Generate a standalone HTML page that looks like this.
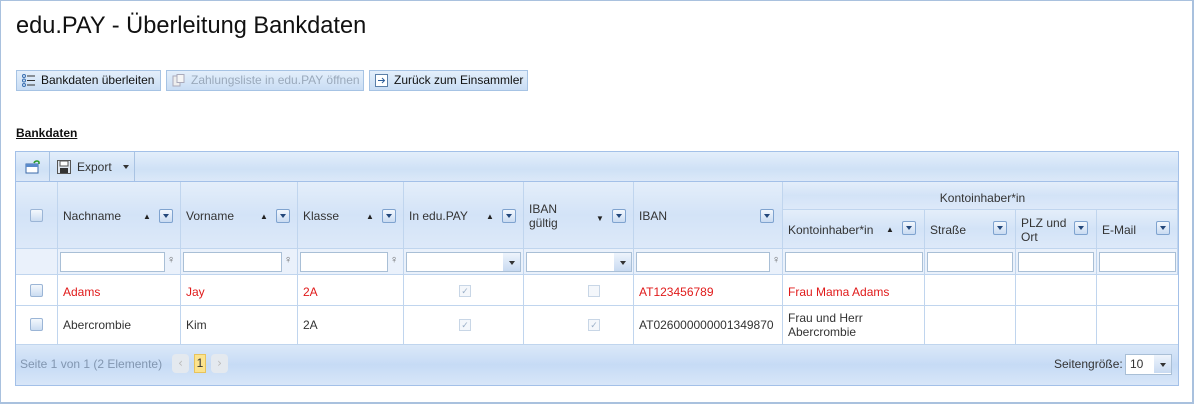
<!DOCTYPE html>
<html><head><meta charset="utf-8"><style>
*{box-sizing:border-box}
body{margin:0;width:1194px;height:405px;overflow:hidden;font-family:"DejaVu Sans","Liberation Sans",sans-serif;font-size:12px;color:#333;background:#fff}
.frame{position:absolute;left:0;top:0;width:1194px;height:404px;border:1px solid #a9c1de;border-right-width:2px;border-bottom-width:2px}
h1{position:absolute;left:16px;top:13px;margin:0;font-family:"Liberation Sans",sans-serif;font-weight:normal;font-size:23.6px;color:#111}
.btn{position:absolute;top:70px;height:21px;border:1px solid #a6c3e4;background:linear-gradient(#e4effb,#c9ddf4);font-family:"Liberation Sans",sans-serif;font-size:12px;line-height:19px;padding-left:24px;color:#111;white-space:nowrap}
.btn.dis{color:#9aa9bb}
.btn i{position:absolute;left:5px;top:3px;width:13px;height:13px}
.lbl{position:absolute;left:16px;top:126px;font-family:"Liberation Sans",sans-serif;font-weight:bold;font-size:12px;text-decoration:underline;color:#111}
.grid{position:absolute;left:15px;top:151px;width:1164px;height:235px;border:1px solid #a3c0e8;background:#fff}
.tb{position:absolute;left:0;top:0;width:1162px;height:30px;background:linear-gradient(#e3eefb,#cfe1f6 60%,#dbe8f8);border-bottom:1px solid #a3c0e8}
.c{position:absolute;border-right:1px solid #c0d5ee;border-bottom:1px solid #c0d5ee;font-size:12px;font-family:"Liberation Sans",sans-serif;padding-left:5px;white-space:nowrap}
.hd{background:linear-gradient(#e4eefa,#d3e3f7 50%,#dde9f9)}
.fr{background:#eaf1fb}
.red{color:#e01a1a}
.dd{position:absolute;width:14px;height:14px;border:1px solid #7fa3cf;background:linear-gradient(#f2f7fd,#c9dbf2);border-radius:2px}
.dd:after{content:"";position:absolute;left:3px;top:4px;border-left:3px solid transparent;border-right:3px solid transparent;border-top:4px solid #23477a}
.ar{position:absolute;font-size:8px;color:#222}
.inp{position:absolute;height:20px;border:1px solid #a9bfd6;background:#fff}
.sel:after{content:"";position:absolute;right:0;top:0;width:17px;height:18px;background:linear-gradient(#eef4fc,#c8daf1)}
.sel:before{content:"";position:absolute;right:5px;top:8px;border-left:3px solid transparent;border-right:3px solid transparent;border-top:4px solid #333;z-index:2}
.cb{position:absolute;width:13px;height:13px;border:1px solid #9bb5d6;background:linear-gradient(#f4f8fd,#cbdcf1);border-radius:2px}
.ck{position:absolute;width:12px;height:12px;border:1px solid #c8d6e6;background:#f4f7fb;font-size:9px;color:#9cb0c8;line-height:10px;text-align:center}
.pager{position:absolute;left:0;top:193px;width:1162px;height:40px;background:linear-gradient(#dbe8f8,#c6dbf5 50%,#d8e6f8)}
.fn{position:absolute;font-size:11px;color:#666}
</style></head><body>
<div class="frame"></div>
<h1>edu.PAY - Überleitung Bankdaten</h1>
<div class="btn" style="left:16px;width:145px"><i><svg width="13" height="13"><circle cx="2" cy="2" r="1.5" fill="none" stroke="#3a6fb0"/><circle cx="2" cy="6.5" r="1.5" fill="none" stroke="#3a6fb0"/><circle cx="2" cy="11" r="1.5" fill="none" stroke="#3a6fb0"/><path d="M5 2h8M5 6.5h8M5 11h8" stroke="#333"/></svg></i>Bankdaten überleiten</div>
<div class="btn dis" style="left:166px;width:198px"><i><svg width="13" height="13"><rect x="1" y="2" width="7" height="10" fill="#eee" stroke="#aab"/><rect x="5" y="0.5" width="7" height="8" fill="#f5f5f5" stroke="#aab"/></svg></i>Zahlungsliste in edu.PAY öffnen</div>
<div class="btn" style="left:369px;width:159px"><i><svg width="13" height="13"><rect x="0.5" y="0.5" width="12" height="12" fill="#fff" stroke="#5b7fa8"/><path d="M3 6.5h6M7 4l2.5 2.5L7 9" stroke="#2f5f9a" fill="none"/></svg></i>Zurück zum Einsammler</div>
<div class="lbl">Bankdaten</div>

<div class="grid">
 <div class="tb">
  <svg style="position:absolute;left:9px;top:7px" width="16" height="16"><rect x="1" y="5" width="12" height="9" fill="#fff" stroke="#3b6aa8"/><rect x="1" y="5" width="12" height="3" fill="#5a8acb"/><path d="M9 4a3 3 0 0 1 5-1l0 2" stroke="#2a9a2a" fill="none" stroke-width="1.5"/></svg>
  <div style="position:absolute;left:33px;top:0;width:1px;height:29px;background:#a9c3e3"></div>
  <svg style="position:absolute;left:41px;top:8px" width="14" height="14"><rect x="0.5" y="0.5" width="13" height="13" fill="#dfe6ef" stroke="#555"/><rect x="3" y="1" width="8" height="5" fill="#fff" stroke="#555"/><rect x="3" y="8" width="8" height="5" fill="#333"/></svg>
  <div style="position:absolute;left:61px;top:8px;font-family:'Liberation Sans',sans-serif">Export</div>
  <div style="position:absolute;left:107px;top:13px;border-left:3px solid transparent;border-right:3px solid transparent;border-top:4px solid #333"></div>
  <div style="position:absolute;left:118px;top:0;width:1px;height:29px;background:#a9c3e3"></div>
 </div>
 <div class="c hd" style="left:0;top:30px;width:42px;height:67px"><div class="cb" style="left:14px;top:27px"></div></div>
 <div class="c hd" style="left:42px;top:30px;width:123px;height:67px;padding-top:27px">Nachname<span class="ar" style="left:85px;top:30px">▲</span><div class="dd" style="left:101px;top:27px"></div></div>
 <div class="c hd" style="left:165px;top:30px;width:117px;height:67px;padding-top:27px">Vorname<span class="ar" style="left:79px;top:30px">▲</span><div class="dd" style="left:95px;top:27px"></div></div>
 <div class="c hd" style="left:282px;top:30px;width:106px;height:67px;padding-top:27px">Klasse<span class="ar" style="left:68px;top:30px">▲</span><div class="dd" style="left:84px;top:27px"></div></div>
 <div class="c hd" style="left:388px;top:30px;width:120px;height:67px;padding-top:27px">In edu.PAY<span class="ar" style="left:82px;top:30px">▲</span><div class="dd" style="left:98px;top:27px"></div></div>
 <div class="c hd" style="left:508px;top:30px;width:110px;height:67px;padding-top:20px;line-height:14px;white-space:normal">IBAN<br>gültig<span class="ar" style="left:72px;top:30px">▼</span><div class="dd" style="left:88px;top:27px"></div></div>
 <div class="c hd" style="left:618px;top:30px;width:149px;height:67px;padding-top:27px">IBAN<div class="dd" style="left:126px;top:27px"></div></div>
 <div class="c hd" style="left:767px;top:30px;width:395px;height:28px;text-align:center;padding-top:9px">Kontoinhaber*in</div>
 <div class="c hd" style="left:767px;top:58px;width:142px;height:39px;padding-top:13px">Kontoinhaber*in<span class="ar" style="left:103px;top:15px">▲</span><div class="dd" style="left:119px;top:11px"></div></div>
 <div class="c hd" style="left:909px;top:58px;width:91px;height:39px;padding-top:13px">Straße<div class="dd" style="left:68px;top:11px"></div></div>
 <div class="c hd" style="left:1000px;top:58px;width:81px;height:39px;padding-top:6px;line-height:14px;white-space:normal">PLZ und<br>Ort<div class="dd" style="left:58px;top:11px"></div></div>
 <div class="c hd" style="left:1081px;top:58px;width:81px;height:39px;padding-top:13px">E-Mail<div class="dd" style="left:59px;top:11px"></div></div>
 <div class="c fr" style="left:0;top:97px;width:42px;height:26px"></div>
 <div class="c fr" style="left:42px;top:97px;width:123px;height:26px"><div class="inp" style="left:2px;top:3px;width:105px"></div><span class="fn" style="left:109px;top:5px">♀</span></div>
 <div class="c fr" style="left:165px;top:97px;width:117px;height:26px"><div class="inp" style="left:2px;top:3px;width:99px"></div><span class="fn" style="left:103px;top:5px">♀</span></div>
 <div class="c fr" style="left:282px;top:97px;width:106px;height:26px"><div class="inp" style="left:2px;top:3px;width:88px"></div><span class="fn" style="left:92px;top:5px">♀</span></div>
 <div class="c fr" style="left:388px;top:97px;width:120px;height:26px"><div class="inp sel" style="left:2px;top:3px;width:115px"></div></div>
 <div class="c fr" style="left:508px;top:97px;width:110px;height:26px"><div class="inp sel" style="left:2px;top:3px;width:106px"></div></div>
 <div class="c fr" style="left:618px;top:97px;width:149px;height:26px"><div class="inp" style="left:2px;top:3px;width:134px"></div><span class="fn" style="left:138px;top:5px">♀</span></div>
 <div class="c fr" style="left:767px;top:97px;width:142px;height:26px"><div class="inp" style="left:2px;top:3px;width:138px"></div></div>
 <div class="c fr" style="left:909px;top:97px;width:91px;height:26px"><div class="inp" style="left:2px;top:3px;width:86px"></div></div>
 <div class="c fr" style="left:1000px;top:97px;width:81px;height:26px"><div class="inp" style="left:2px;top:3px;width:76px"></div></div>
 <div class="c fr" style="left:1081px;top:97px;width:81px;height:26px"><div class="inp" style="left:2px;top:3px;width:77px"></div></div>
 <div class="c" style="left:0;top:123px;width:42px;height:31px"><div class="cb" style="left:14px;top:9px"></div></div>
 <div class="c red" style="left:42px;top:123px;width:123px;height:31px;padding-top:10px">Adams</div>
 <div class="c red" style="left:165px;top:123px;width:117px;height:31px;padding-top:10px">Jay</div>
 <div class="c red" style="left:282px;top:123px;width:106px;height:31px;padding-top:10px">2A</div>
 <div class="c" style="left:388px;top:123px;width:120px;height:31px"><div class="ck" style="left:55px;top:10px">✓</div></div>
 <div class="c" style="left:508px;top:123px;width:110px;height:31px"><div class="ck" style="left:64px;top:10px"></div></div>
 <div class="c red" style="left:618px;top:123px;width:149px;height:31px;padding-top:10px">AT123456789</div>
 <div class="c red" style="left:767px;top:123px;width:142px;height:31px;padding-top:10px">Frau Mama Adams</div>
 <div class="c" style="left:909px;top:123px;width:91px;height:31px"></div>
 <div class="c" style="left:1000px;top:123px;width:81px;height:31px"></div>
 <div class="c" style="left:1081px;top:123px;width:81px;height:31px;border-right:0"></div>
 <div class="c" style="left:0;top:154px;width:42px;height:39px"><div class="cb" style="left:14px;top:12px"></div></div>
 <div class="c" style="left:42px;top:154px;width:123px;height:39px;padding-top:12px">Abercrombie</div>
 <div class="c" style="left:165px;top:154px;width:117px;height:39px;padding-top:12px">Kim</div>
 <div class="c" style="left:282px;top:154px;width:106px;height:39px;padding-top:12px">2A</div>
 <div class="c" style="left:388px;top:154px;width:120px;height:39px"><div class="ck" style="left:55px;top:13px">✓</div></div>
 <div class="c" style="left:508px;top:154px;width:110px;height:39px"><div class="ck" style="left:64px;top:13px">✓</div></div>
 <div class="c" style="left:618px;top:154px;width:149px;height:39px;padding-top:12px">AT026000000001349870</div>
 <div class="c" style="left:767px;top:154px;width:142px;height:39px;padding-top:5px;line-height:14px">Frau und Herr<br>Abercrombie</div>
 <div class="c" style="left:909px;top:154px;width:91px;height:39px"></div>
 <div class="c" style="left:1000px;top:154px;width:81px;height:39px"></div>
 <div class="c" style="left:1081px;top:154px;width:81px;height:39px;border-right:0"></div>
 <div class="pager">
  <div style="position:absolute;left:4px;top:12px;color:#8296b0;font-family:'Liberation Sans',sans-serif">Seite 1 von 1 (2 Elemente)</div>
  <div style="position:absolute;left:156px;top:9px;width:17px;height:19px;border-radius:4px;background:#e4e9ef;color:#bbb;text-align:center;line-height:18px">‹</div>
  <div style="position:absolute;left:178px;top:9px;width:12px;height:19px;background:#fbe38e;border:1px solid #e8c35c;text-align:center;line-height:17px;font-family:'Liberation Sans',sans-serif">1</div>
  <div style="position:absolute;left:195px;top:9px;width:17px;height:19px;border-radius:4px;background:#e4e9ef;color:#bbb;text-align:center;line-height:18px">›</div>
  <div style="position:absolute;left:1038px;top:12px;font-family:'Liberation Sans',sans-serif">Seitengröße:</div>
  <div class="inp sel" style="left:1109px;top:9px;width:47px;height:21px;padding:2px 0 0 4px;font-family:'Liberation Sans',sans-serif">10</div>
 </div>
</div>
</body></html>
